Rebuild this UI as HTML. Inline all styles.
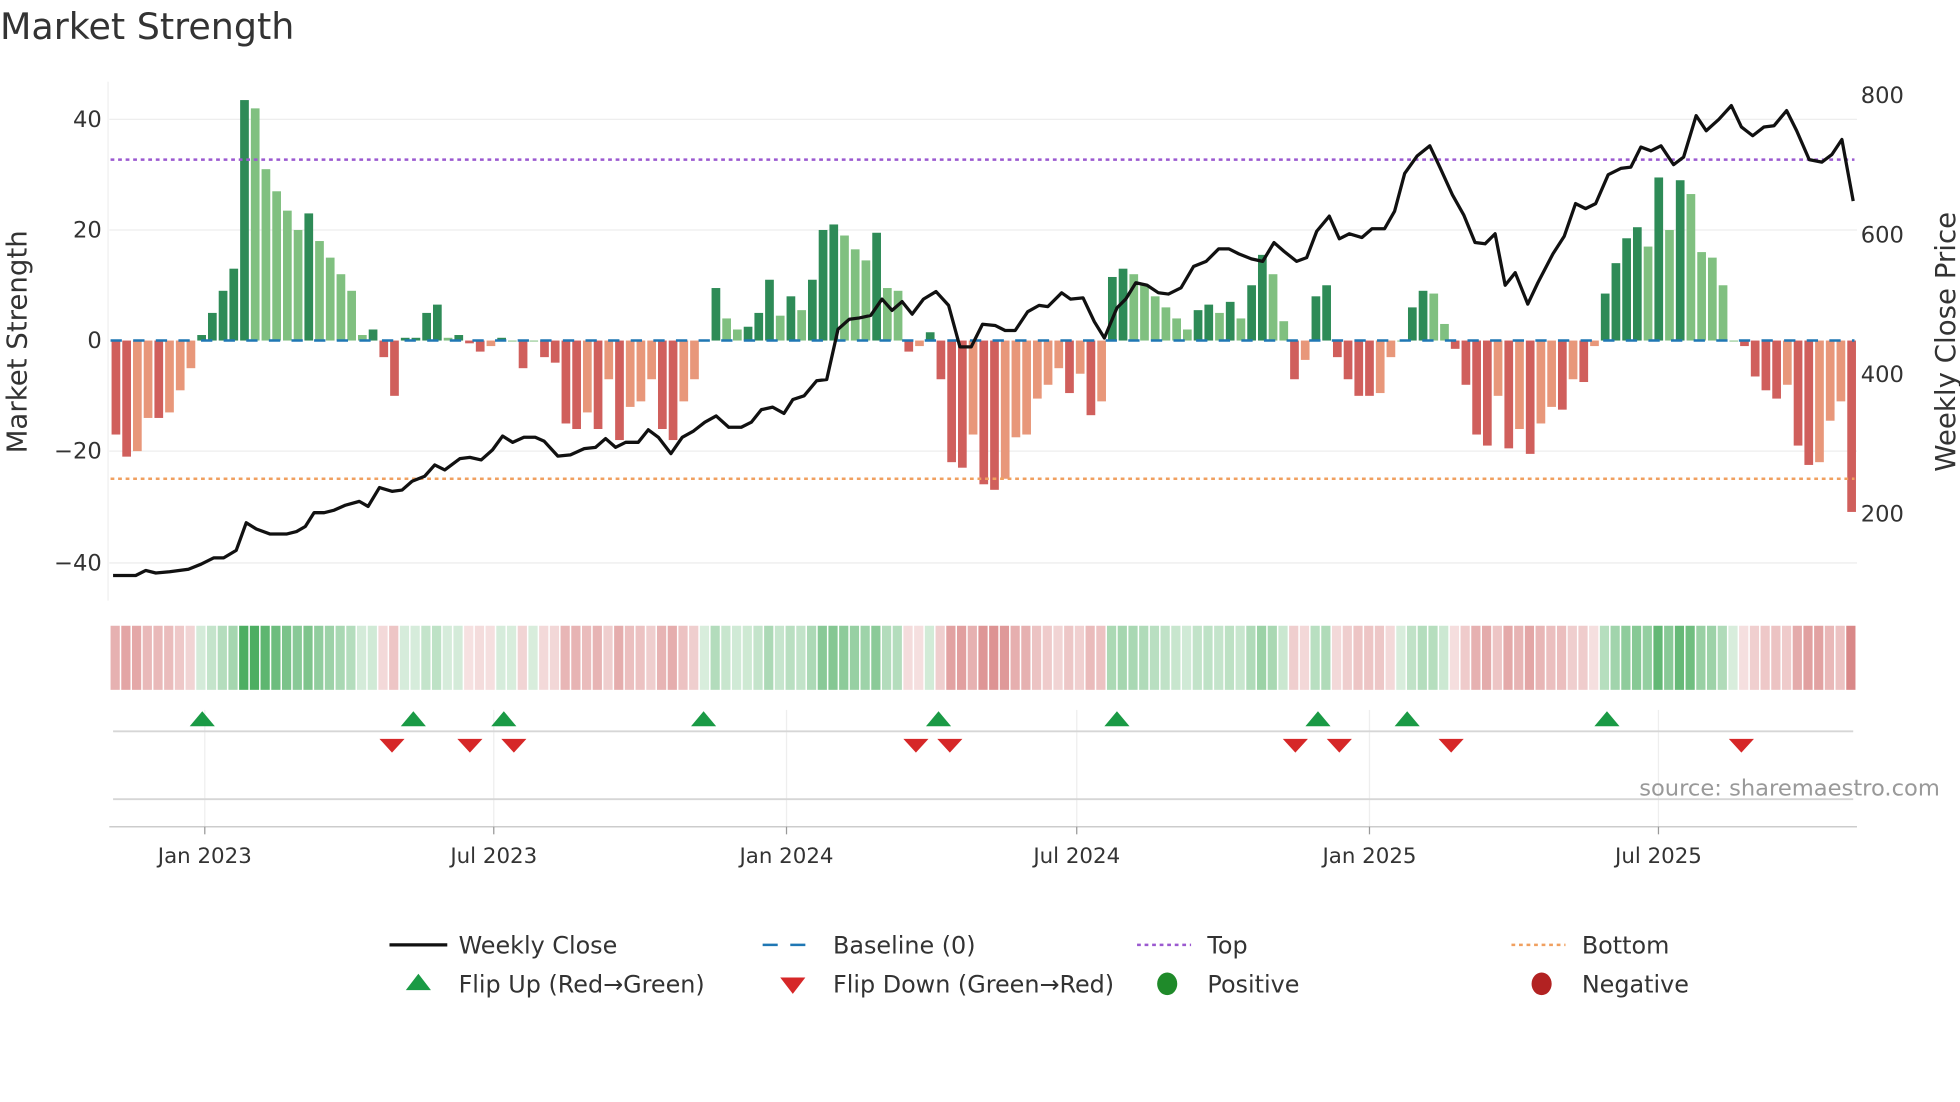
<!DOCTYPE html>
<html><head><meta charset="utf-8"><style>
html,body{margin:0;padding:0;background:#fff;width:1960px;height:1102px;overflow:hidden}
svg{display:block}
text{font-family:"DejaVu Sans","Liberation Sans",sans-serif;fill:#333}
</style></head><body>
<svg id="s" width="1960" height="1102" viewBox="0 0 1560 877" xmlns="http://www.w3.org/2000/svg">
<text x="0" y="31" font-size="29">Market Strength</text>
<g id="grid" stroke="#eeeeee" stroke-width="1">
<line x1="87" x2="1478" y1="95" y2="95"/><line x1="87" x2="1478" y1="183" y2="183"/>
<line x1="87" x2="1478" y1="359" y2="359"/><line x1="87" x2="1478" y1="448" y2="448"/>
<line x1="86" x2="86" y1="65" y2="478"/>
</g>
<g font-size="18" text-anchor="end">
<text x="81" y="101">40</text><text x="81" y="189">20</text><text x="81" y="277">0</text>
<text x="81" y="365">−20</text><text x="81" y="454">−40</text>
</g>
<g font-size="18">
<text x="1481" y="82">800</text><text x="1481" y="193">600</text><text x="1481" y="304">400</text><text x="1481" y="415">200</text>
</g>
<text font-size="22" transform="translate(21,272) rotate(-90)" text-anchor="middle">Market Strength</text>
<text font-size="22" transform="translate(1556,272) rotate(-90)" text-anchor="middle">Weekly Close Price</text>
<g id="bars"></g>
<line x1="88" x2="1476" y1="271" y2="271" stroke="#1f77b4" stroke-width="2" stroke-dasharray="9,9"/>
<line x1="88" x2="1476" y1="127" y2="127" stroke="#9b59d0" stroke-width="2" stroke-dasharray="3,3"/>
<line x1="88" x2="1476" y1="381" y2="381" stroke="#f0a060" stroke-width="2" stroke-dasharray="3,3"/>
<polyline id="price" fill="none" stroke="#111" stroke-width="2.6" stroke-linejoin="round"/>
<g id="heat"></g>
<g stroke="#eeeeee" stroke-width="1">
<line x1="163" x2="163" y1="565" y2="658"/><line x1="393" x2="393" y1="565" y2="658"/>
<line x1="626" x2="626" y1="565" y2="658"/><line x1="857" x2="857" y1="565" y2="658"/>
<line x1="1090" x2="1090" y1="565" y2="658"/><line x1="1320" x2="1320" y1="565" y2="658"/>
</g>
<line x1="90" x2="1475" y1="582" y2="582" stroke="#d6d6d6" stroke-width="1.5"/>
<line x1="90" x2="1475" y1="636" y2="636" stroke="#d6d6d6" stroke-width="1.5"/>
<line x1="87" x2="1478" y1="658" y2="658" stroke="#cccccc" stroke-width="1.2"/>
<g stroke="#999" stroke-width="1">
<line x1="163" x2="163" y1="658" y2="664"/><line x1="393" x2="393" y1="658" y2="664"/>
<line x1="626" x2="626" y1="658" y2="664"/><line x1="857" x2="857" y1="658" y2="664"/>
<line x1="1090" x2="1090" y1="658" y2="664"/><line x1="1320" x2="1320" y1="658" y2="664"/>
</g>
<g id="flips"></g>
<text x="1544" y="633" font-size="18" text-anchor="end" style="fill:#999">source: sharemaestro.com</text>
<g font-size="17" text-anchor="middle">
<text x="163" y="687">Jan 2023</text><text x="393" y="687">Jul 2023</text><text x="626" y="687">Jan 2024</text>
<text x="857" y="687">Jul 2024</text><text x="1090" y="687">Jan 2025</text><text x="1320" y="687">Jul 2025</text>
</g>
<g font-size="19">
<line x1="310" x2="356" y1="752" y2="752" stroke="#111" stroke-width="2.6"/>
<text x="365" y="759">Weekly Close</text>
<line x1="607" x2="650" y1="752" y2="752" stroke="#1f77b4" stroke-width="2" stroke-dasharray="12,10"/>
<text x="663" y="759">Baseline (0)</text>
<line x1="905" x2="948" y1="752" y2="752" stroke="#9b59d0" stroke-width="2" stroke-dasharray="3,3"/>
<text x="961" y="759">Top</text>
<line x1="1203" x2="1246" y1="752" y2="752" stroke="#f0a060" stroke-width="2" stroke-dasharray="3,3"/>
<text x="1259" y="759">Bottom</text>
<polygon points="323,788 343,788 333,775" fill="#1a9a45"/>
<text x="365" y="790">Flip Up (Red→Green)</text>
<polygon points="621,778 641,778 631,791" fill="#d62728"/>
<text x="663" y="790">Flip Down (Green→Red)</text>
<ellipse cx="929" cy="783" rx="8" ry="9" fill="#1f8a2a"/>
<text x="961" y="790">Positive</text>
<ellipse cx="1227" cy="783" rx="8" ry="9" fill="#b22222"/>
<text x="1259" y="790">Negative</text>
</g>
</svg>
<script>
var NS="http://www.w3.org/2000/svg";
var v=[-17,-21,-20,-14,-14,-13,-9,-5,1,5,9,13,43.5,42,31,27,23.5,20,23,18,15,12,9,1,2,-3,-10,0.5,0.5,5,6.5,0.5,1,-0.5,-2,-1,0.5,0,-5,0,-3,-4,-15,-16,-13,-16,-7,-18,-12,-11,-7,-16,-18,-11,-7,0,9.5,4,2,2.5,5,11,4.5,8,5.5,11,20,21,19,16.5,14.5,19.5,9.5,9,-2,-1,1.5,-7,-22,-23,-17,-26,-27,-25,-17.5,-17,-10.5,-8,-5,-9.5,-6,-13.5,-11,11.5,13,12,10,8,6,4,2,5.5,6.5,5,7,4,10,15.5,12,3.5,-7,-3.5,8,10,-3,-7,-10,-10,-9.5,-3,0,6,9,8.5,3,-1.5,-8,-17,-19,-10,-19.5,-16,-20.5,-15,-12,-12.5,-7,-7.5,-1,8.5,14,18.5,20.5,17,29.5,20,29,26.5,16,15,10,0,-1,-6.5,-9,-10.5,-8,-19,-22.5,-22,-14.5,-11,-31];
var n=v.length,x0=88,x1=1478,pw=(x1-x0)/n,bars=document.getElementById('bars'),heat=document.getElementById('heat');
for(var i=0;i<n;i++){
 var a=v[i],p=i?v[i-1]:0,dark=Math.abs(a)>=Math.abs(p)||(a*p<0);
 var col=a>=0?(dark?'#2e8b57':'#80c080'):(dark?'#d05f5c':'#e8977a');
 var x=x0+i*pw,y0=271,h=a*4.4;
 var r=document.createElementNS(NS,'rect');
 r.setAttribute('x',x+0.8);r.setAttribute('width',pw-1.6);
 r.setAttribute('y',h>=0?y0-h:y0);r.setAttribute('height',Math.max(Math.abs(h),0.8));
 r.setAttribute('fill',col);bars.appendChild(r);
 var t=Math.min(1,0.22+Math.abs(a)/45);
 var c=a>=0?'rgba(46,160,70,'+(t*0.85)+')':'rgba(200,80,80,'+(t*0.75)+')';
 var q=document.createElementNS(NS,'rect');
 q.setAttribute('x',x);q.setAttribute('width',pw-1.2);q.setAttribute('y',498);q.setAttribute('height',51);
 q.setAttribute('fill',c);heat.appendChild(q);
}
var pts=[[90,458],[108,458],[116,454],[124,456],[135,455],[150,453],[160,449],[170,444],[178,444],[188,438],[196,416],[204,421],[215,425],[228,425],[236,423],[243,419],[250,408],[258,408],[266,406],[275,402],[286,399],[293,403],[302,388],[312,391],[320,390],[328,383],[338,379],[346,370],[354,374],[366,365],[374,364],[383,366],[392,358],[400,347],[408,352],[417,348],[426,348],[433,351],[444,363],[454,362],[465,357],[474,356],[482,349],[490,356],[498,352],[508,352],[516,342],[524,348],[534,361],[543,348],[552,343],[561,336],[570,331],[580,340],[590,340],[598,336],[606,326],[615,324],[624,329],[631,318],[640,315],[650,303],[658,302],[667,262],[676,254],[684,253],[693,251],[702,238],[710,247],[718,240],[726,250],[735,238],[745,232],[755,243],[764,276],[773,276],[782,258],[792,259],[800,263],[808,263],[818,248],[827,243],[834,244],[845,233],[852,238],[862,237],[871,256],[879,269],[889,245],[896,238],[904,225],[913,227],[922,233],[930,234],[940,229],[950,212],[960,208],[970,198],[978,198],[986,202],[996,206],[1005,208],[1014,193],[1022,200],[1032,208],[1040,205],[1048,184],[1058,172],[1066,190],[1074,186],[1084,189],[1092,182],[1102,182],[1110,168],[1118,138],[1128,124],[1138,116],[1146,133],[1156,155],[1165,171],[1174,193],[1182,194],[1190,186],[1198,227],[1206,217],[1216,242],[1224,225],[1236,202],[1245,188],[1254,162],[1262,166],[1270,162],[1280,139],[1290,134],[1298,133],[1306,117],[1314,120],[1322,116],[1332,131],[1340,125],[1350,92],[1358,104],[1368,95],[1378,84],[1386,101],[1395,108],[1404,101],[1412,100],[1422,88],[1430,104],[1440,127],[1450,129],[1458,123],[1466,111],[1475,160]];
document.getElementById('price').setAttribute('points',pts.map(function(p){return p.join(',')}).join(' '));
var f=document.getElementById('flips');
[161,329,401,560,747,889,1049,1120,1279].forEach(function(x){var g=document.createElementNS(NS,'polygon');g.setAttribute('points',(x-10)+',578 '+(x+10)+',578 '+x+',566');g.setAttribute('fill','#1a9a45');f.appendChild(g);});
[312,374,409,729,756,1031,1066,1155,1386].forEach(function(x){var g=document.createElementNS(NS,'polygon');g.setAttribute('points',(x-10)+',588 '+(x+10)+',588 '+x+',599');g.setAttribute('fill','#d62728');f.appendChild(g);});
</script>
</body></html>
